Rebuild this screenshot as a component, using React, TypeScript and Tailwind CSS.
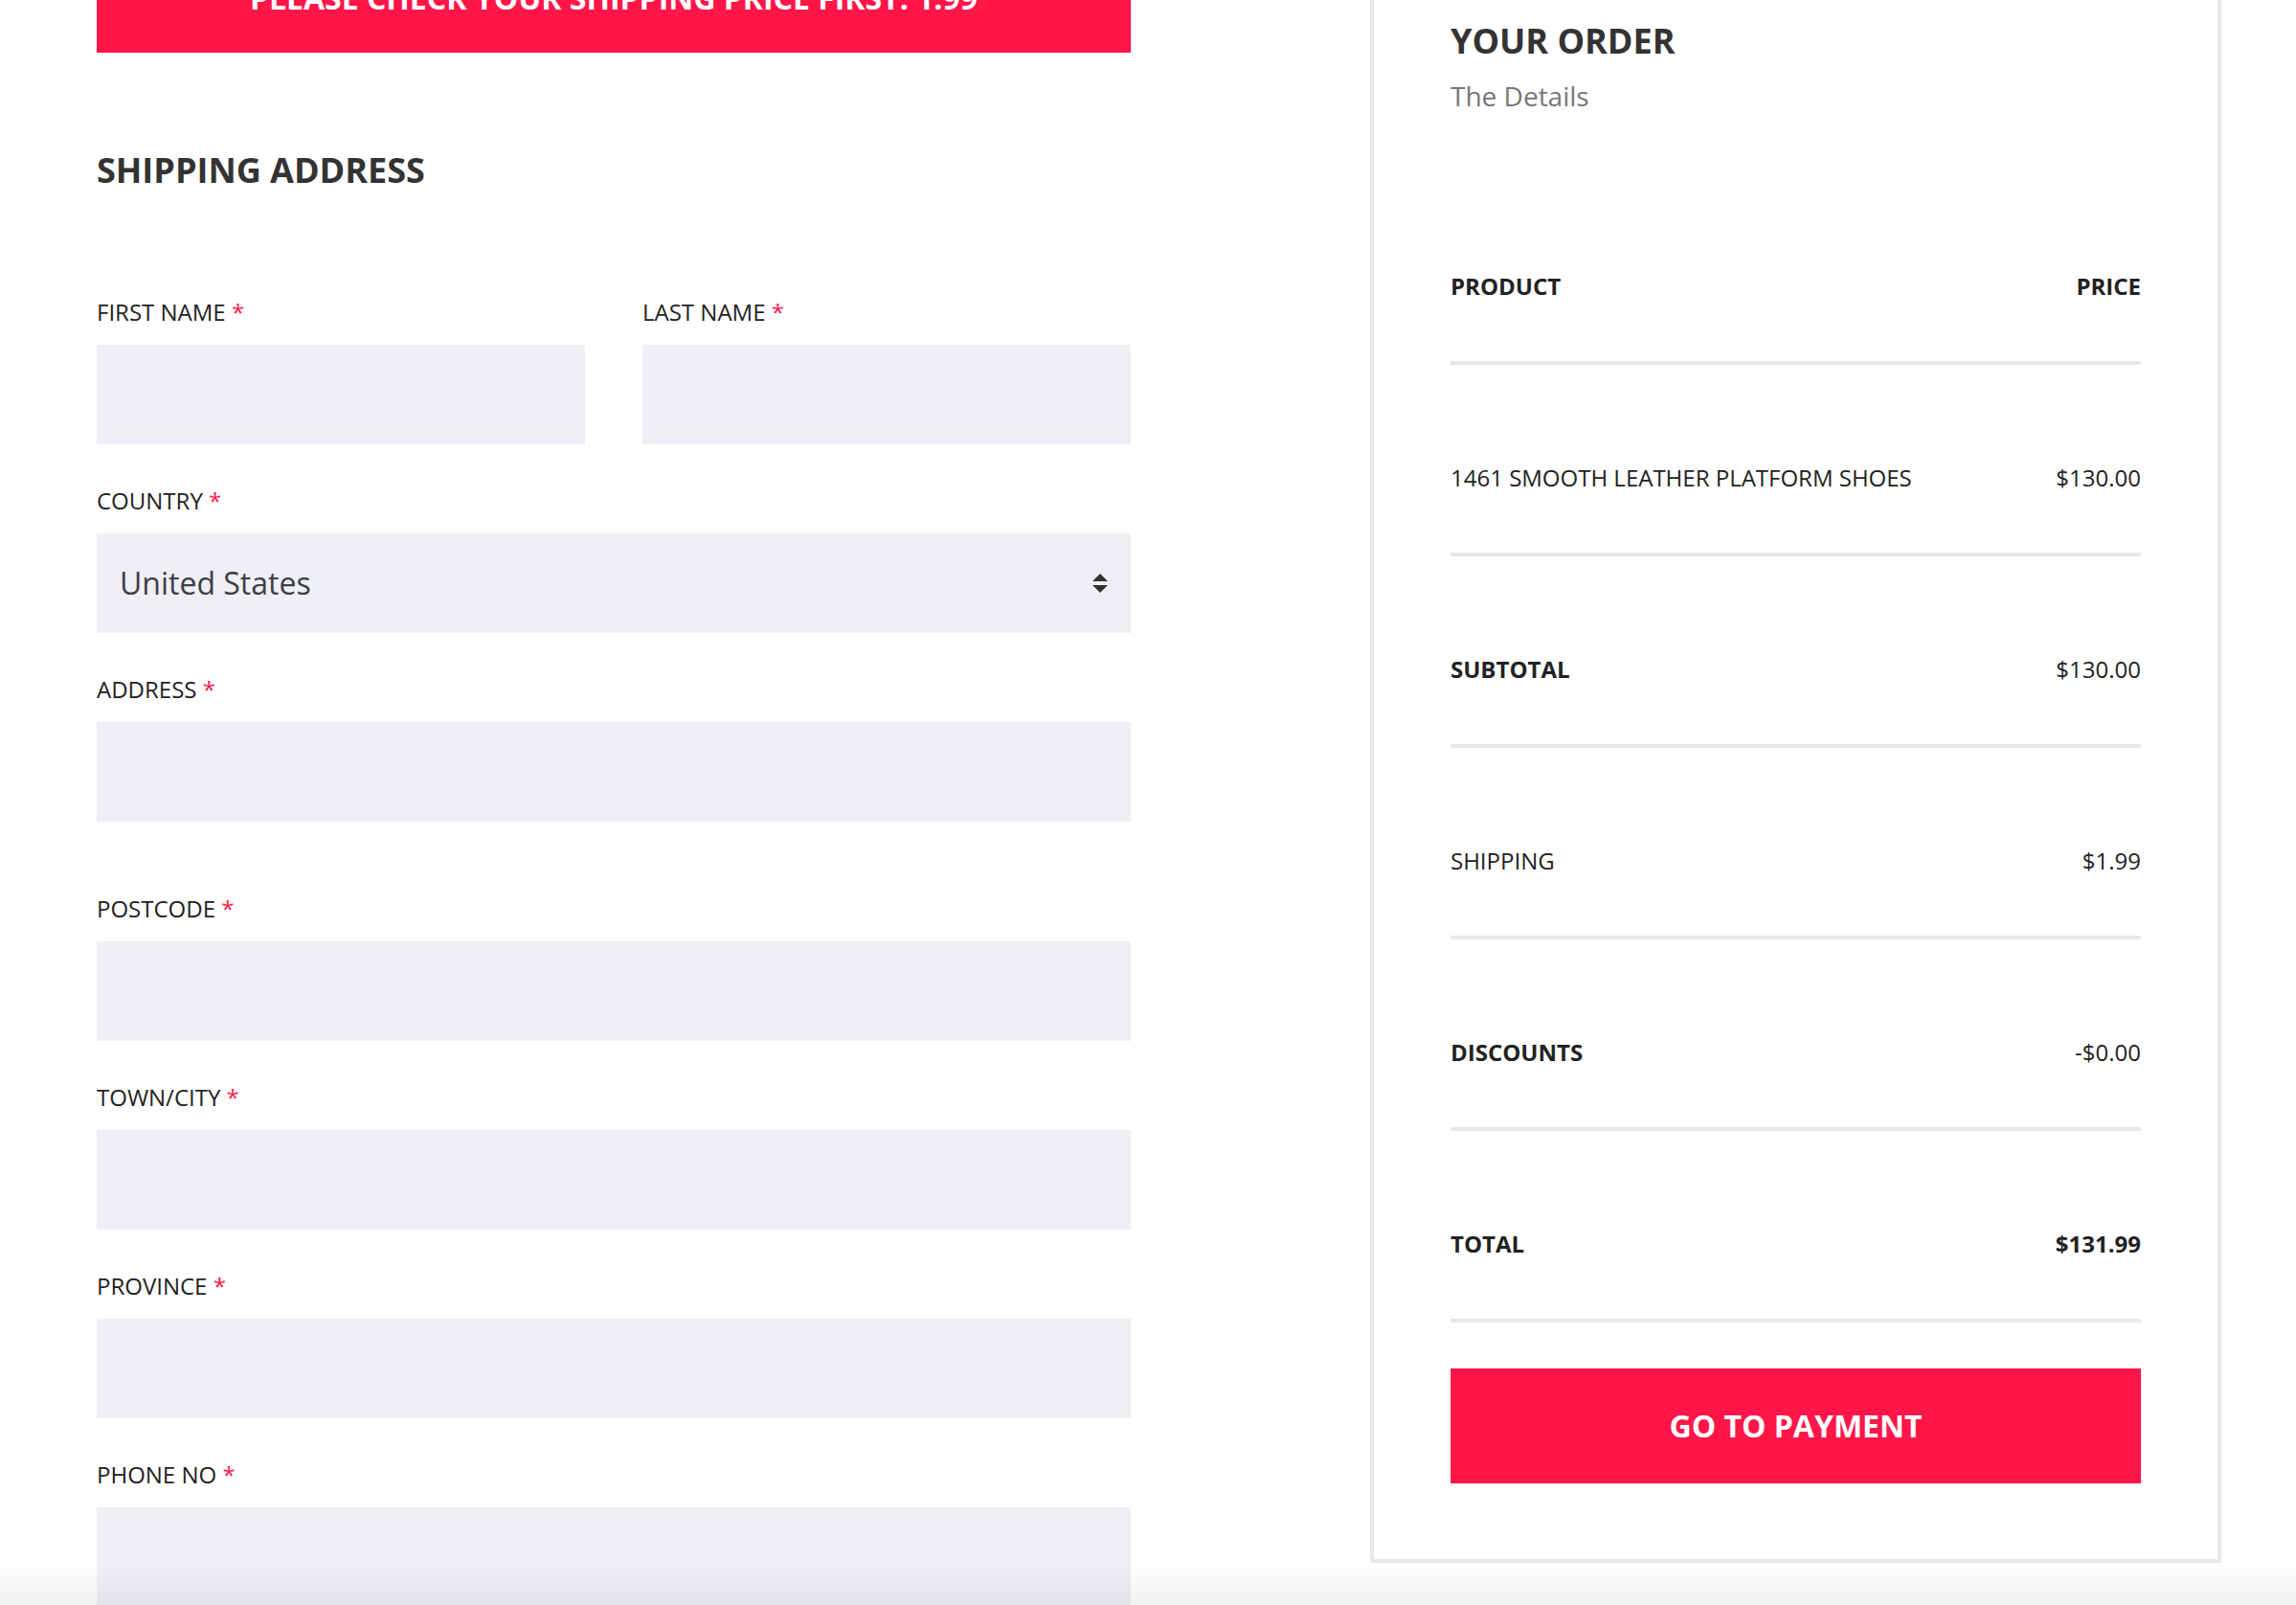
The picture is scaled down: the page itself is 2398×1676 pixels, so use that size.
import { useState } from "react";

const RED = "bg-[#ff1649]";

function Label({ text }: { text: string }) {
  return (
    <label className="block h-[34px] text-[24px] leading-[34px] text-[#222]">
      {text} <span className="text-[#ff1649]">*</span>
    </label>
  );
}

function TextField({ label, className = "" }: { label: string; className?: string }) {
  return (
    <div className={className}>
      <Label text={label} />
      <input
        type="text"
        className="mt-[17px] block h-[104px] w-full bg-[#f0eff5] px-6 text-[30px] text-[#333] outline-none"
      />
    </div>
  );
}

function Row({ left, right, boldLeft, boldRight }: { left: string; right: string; boldLeft?: boolean; boldRight?: boolean }) {
  return (
    <div className="flex items-center justify-between border-b-4 border-[#e8e8e8] pt-[101px] pb-[61px] text-[24px] leading-[34px] text-[#222]">
      <span className={boldLeft ? "font-bold" : ""}>{left}</span>
      <span className={boldRight ? "font-bold" : ""}>{right}</span>
    </div>
  );
}

export default function App() {
  const [country, setCountry] = useState("United States");

  return (
    <div className="relative h-[1676px] overflow-hidden bg-white font-['Open_Sans',sans-serif]">
      <div className="-mt-[60px] flex gap-[250px] pl-[101px]">
        {/* shipping form */}
        <div className="w-[1080px]">
          <div className={`${RED} flex h-[115px] items-center justify-center`}>
            <span className="text-[32px] font-bold leading-[32px] text-white">
              PLEASE CHECK YOUR SHIPPING PRICE FIRST: 1.99
            </span>
          </div>

          <h2 className="mt-[101px] text-[36px] font-bold leading-[44px] text-[#333]">SHIPPING ADDRESS</h2>

          <div className="mt-[109px] grid grid-cols-2 gap-[60px]">
            <TextField label="FIRST NAME" />
            <TextField label="LAST NAME" />
          </div>

          <div className="mt-[42px]">
            <Label text="COUNTRY" />
            <div className="relative mt-[17px]">
              <select
                value={country}
                onChange={(e) => setCountry(e.target.value)}
                className="block h-[104px] w-full appearance-none bg-[#f0eff5] pl-6 text-[32px] text-[#3c4047] outline-none"
              >
                <option>United States</option>
                <option>Canada</option>
                <option>United Kingdom</option>
              </select>
              <svg
                className="pointer-events-none absolute right-6 top-[42px]"
                width="16"
                height="20"
                viewBox="0 0 16 20"
              >
                <polygon points="0,8 8,0 16,8" fill="#333" />
                <polygon points="0,12 16,12 8,20" fill="#333" />
              </svg>
            </div>
          </div>

          <TextField label="ADDRESS" className="mt-[42px]" />
          <TextField label="POSTCODE" className="mt-[74px]" />
          <TextField label="TOWN/CITY" className="mt-[42px]" />
          <TextField label="PROVINCE" className="mt-[42px]" />
          <TextField label="PHONE NO" className="mt-[42px]" />
        </div>

        {/* order summary */}
        <div className="w-[889px] self-start border-4 border-[#e8e8e8] px-[80px] pt-[77px] pb-[79px]">
          <h2 className="text-[36px] font-bold leading-[44px] text-[#333]">YOUR ORDER</h2>
          <p className="mt-[15px] text-[28px] leading-[40px] text-[#777]">The Details</p>

          <div className="mt-[61px]">
            <Row left="PRODUCT" right="PRICE" boldLeft boldRight />
            <Row left="1461 SMOOTH LEATHER PLATFORM SHOES" right="$130.00" />
            <Row left="SUBTOTAL" right="$130.00" boldLeft />
            <Row left="SHIPPING" right="$1.99" />
            <Row left="DISCOUNTS" right="-$0.00" boldLeft />
            <Row left="TOTAL" right="$131.99" boldLeft boldRight />
          </div>

          <button
            className={`${RED} mt-[48px] flex h-[120px] w-full items-center justify-center text-[32px] font-bold text-white`}
          >
            GO TO PAYMENT
          </button>
        </div>
      </div>

      {/* soft fade at the bottom edge */}
      <div className="pointer-events-none absolute inset-x-0 bottom-0 h-[44px] bg-gradient-to-b from-transparent to-[rgba(0,0,0,0.05)]" />
    </div>
  );
}
